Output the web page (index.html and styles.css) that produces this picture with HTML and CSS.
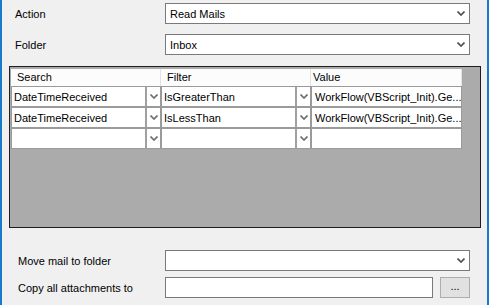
FILE: index.html
```html
<!DOCTYPE html>
<html lang="en">
<head>
    <meta charset="UTF-8">
    <meta name="viewport" content="width=device-width, initial-scale=1.0">
    <title>Read Mails</title>
    <link rel="stylesheet" href="styles.css">
</head>
<body>
    <div class="window">
        <div class="row">
            <label class="label">Action</label>
            <div class="select"><span>Read Mails</span>
                <svg class="chev" width="8" height="5" viewBox="0 0 8 5"><polyline points="0.5,0.5 4,4 7.5,0.5"/></svg>
            </div>
        </div>
        <div class="row folder">
            <label class="label">Folder</label>
            <div class="select"><span>Inbox</span>
                <svg class="chev" width="8" height="5" viewBox="0 0 8 5"><polyline points="0.5,0.5 4,4 7.5,0.5"/></svg>
            </div>
        </div>

        <div class="grid">
            <div class="grid-head">
                <div class="hcell">Search</div>
                <div class="hcell">Filter</div>
                <div class="hcell wide">Value</div>
            </div>
            <div class="grid-row">
                <div class="cell combo"><span>DateTimeReceived</span><div class="btn"><svg class="chev light" width="8" height="5" viewBox="0 0 8 5"><polyline points="0.5,0.5 4,4 7.5,0.5"/></svg></div></div>
                <div class="cell combo"><span>IsGreaterThan</span><div class="btn"><svg class="chev light" width="8" height="5" viewBox="0 0 8 5"><polyline points="0.5,0.5 4,4 7.5,0.5"/></svg></div></div>
                <div class="cell wide"><span>WorkFlow(VBScript_Init).Ge...</span></div>
            </div>
            <div class="grid-row">
                <div class="cell combo"><span>DateTimeReceived</span><div class="btn"><svg class="chev light" width="8" height="5" viewBox="0 0 8 5"><polyline points="0.5,0.5 4,4 7.5,0.5"/></svg></div></div>
                <div class="cell combo"><span>IsLessThan</span><div class="btn"><svg class="chev light" width="8" height="5" viewBox="0 0 8 5"><polyline points="0.5,0.5 4,4 7.5,0.5"/></svg></div></div>
                <div class="cell wide"><span>WorkFlow(VBScript_Init).Ge...</span></div>
            </div>
            <div class="grid-row">
                <div class="cell combo"><span></span><div class="btn"><svg class="chev light" width="8" height="5" viewBox="0 0 8 5"><polyline points="0.5,0.5 4,4 7.5,0.5"/></svg></div></div>
                <div class="cell combo"><span></span><div class="btn"><svg class="chev light" width="8" height="5" viewBox="0 0 8 5"><polyline points="0.5,0.5 4,4 7.5,0.5"/></svg></div></div>
                <div class="cell wide"><span></span></div>
            </div>
        </div>

        <div class="row bottom move">
            <label class="label">Move mail to folder</label>
            <div class="select"><span></span>
                <svg class="chev" width="8" height="5" viewBox="0 0 8 5"><polyline points="0.5,0.5 4,4 7.5,0.5"/></svg>
            </div>
        </div>
        <div class="row bottom copy">
            <label class="label">Copy all attachments to</label>
            <input class="text" type="text">
            <button class="browse">...</button>
        </div>
    </div>
</body>
</html>
```

FILE: styles.css
```css
body {
    margin: 0;
    font-family: "Liberation Sans", Arial, sans-serif;
    font-size: 11px;
    color: #000;
    background: #f0f0f0;
}

.window {
    box-sizing: border-box;
    height: 305px;
    background: #f0f0f0;
    border-left: 2px solid #1979ca;
    border-right: 2px solid #1979ca;
    padding: 3px 6px 0 7px;
}

.row {
    display: flex;
    align-items: center;
    padding: 0 11px 0 6px;
}

.folder {
    margin-top: 10px;
}

.label {
    width: 150px;
    flex-shrink: 0;
}

.select {
    flex: 1;
    box-sizing: border-box;
    height: 21px;
    display: flex;
    align-items: center;
    justify-content: space-between;
    background: #fff;
    border: 1px solid #7a7a7a;
    padding: 0 4px 0 4px;
}

.chev polyline {
    fill: none;
    stroke: #505050;
    stroke-width: 1.7;
}

.chev.light polyline {
    stroke: #707070;
}

/* data grid */
.grid {
    box-sizing: border-box;
    height: 162px;
    margin-top: 11px;
    border: 1px solid #1e1e1e;
    background: #ababab;
    padding: 2px 0 0 1px;
}

.grid-head,
.grid-row {
    display: flex;
}

.hcell {
    box-sizing: border-box;
    width: 150px;
    height: 17px;
    line-height: 16px;
    padding-left: 6px;
    background: #fcfcfc;
    border-right: 1px solid #e3e3e3;
}

.hcell.wide {
    width: 151px;
    padding-left: 2px;
}

.cell {
    box-sizing: border-box;
    width: 150px;
    height: 21px;
    display: flex;
    align-items: center;
    background: #fff;
    border: 1px solid #9a9a9a;
}

.cell span {
    flex: 1;
    padding-left: 2px;
    white-space: nowrap;
    overflow: hidden;
}

.cell.wide {
    width: 151px;
}

.cell.wide span {
    padding-left: 3px;
}

.btn {
    box-sizing: border-box;
    width: 15px;
    height: 100%;
    display: flex;
    align-items: center;
    justify-content: center;
    border-left: 2px solid #a0a0a0;
}

/* bottom fields */
.bottom {
    padding-left: 9px;
}

.bottom .label {
    width: 147px;
}

.move {
    margin-top: 22px;
}

.copy {
    margin-top: 6px;
}

.text {
    box-sizing: border-box;
    width: 268px;
    height: 21px;
    margin: 0;
    border: 1px solid #7a7a7a;
    background: #fff;
}

.browse {
    box-sizing: border-box;
    width: 30px;
    height: 21px;
    margin: 0 0 0 7px;
    padding: 0 0 3px;
    font-family: "Liberation Sans", Arial, sans-serif;
    font-size: 11px;
    color: #000;
    background: #e1e1e1;
    border: 1px solid #adadad;
}
```
